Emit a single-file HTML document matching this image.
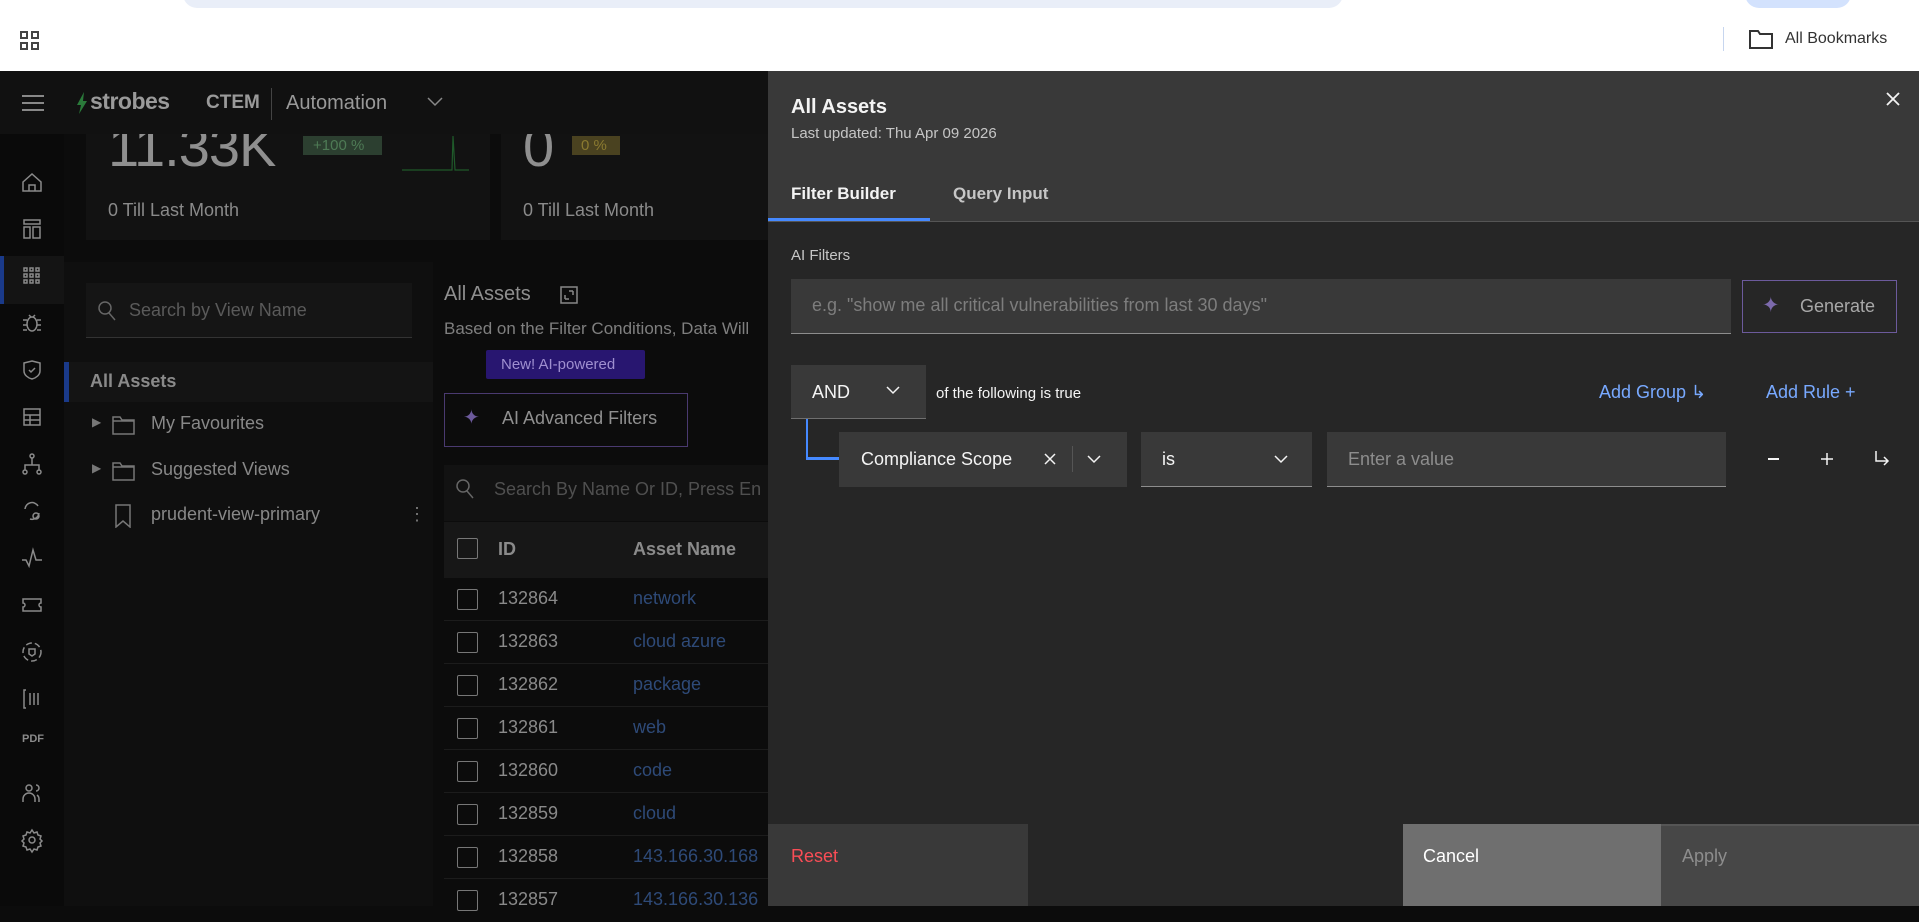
<!DOCTYPE html>
<html><head><meta charset="utf-8"><style>
*{margin:0;padding:0;box-sizing:border-box}
body{width:1919px;height:906px;overflow:hidden;background:#0c0c0c;font-family:"Liberation Sans",sans-serif;position:relative}
.a{position:absolute}
.t{position:absolute;white-space:nowrap}
svg{position:absolute}
</style></head><body>
<!-- cards (under topbar) -->
<div class="a" style="left:86px;top:134px;width:404px;height:106px;background:#121212"></div>
<div class="a" style="left:501px;top:134px;width:267px;height:106px;background:#121212"></div>
<div class="t" style="left:108px;top:114px;font-size:56px;color:#8f8f8f;letter-spacing:-1px">11.33K</div>
<div class="a" style="left:303px;top:136px;width:79px;height:19px;background:#2c3f30"></div>
<div class="t" style="left:313px;top:137px;font-size:15px;color:#4e7a55">+100 %</div>
<svg style="left:400px;top:134px" width="70" height="40" fill="none" stroke="#1f5a2a" stroke-width="1.2"><path d="M2 36h50l1-34 2 34h14"/></svg>
<div class="t" style="left:523px;top:114px;font-size:56px;color:#8f8f8f">0</div>
<div class="a" style="left:572px;top:136px;width:48px;height:19px;background:#4a4220"></div>
<div class="t" style="left:581px;top:137px;font-size:15px;color:#8a7a30">0 %</div>
<div class="t" style="left:108px;top:200px;font-size:18px;color:#8a8a8a">0 Till Last Month</div>
<div class="t" style="left:523px;top:200px;font-size:18px;color:#8a8a8a">0 Till Last Month</div>

<!-- chrome -->
<div class="a" style="left:0;top:0;width:1919px;height:71px;background:#fff"></div>
<div class="a" style="left:183px;top:-20px;width:1160px;height:28px;background:#e9eef8;border-radius:14px"></div>
<div class="a" style="left:1745px;top:-20px;width:106px;height:28px;background:#d3e2fd;border-radius:14px"></div>
<svg style="left:19px;top:30px" width="22" height="22" viewBox="0 0 22 22" fill="none" stroke="#444" stroke-width="2"><rect x="2" y="2" width="6" height="6"/><rect x="13" y="2" width="6" height="6"/><rect x="2" y="13" width="6" height="6"/><rect x="13" y="13" width="6" height="6"/></svg>
<div class="a" style="left:1723px;top:27px;width:1px;height:24px;background:#c7d6ef"></div>
<svg style="left:1748px;top:28px" width="26" height="22" viewBox="0 0 26 22" fill="none" stroke="#333" stroke-width="2"><path d="M2 3h8l2 3h12v14H2z"/></svg>
<div class="t" style="left:1785px;top:30px;font-size:16px;color:#333">All Bookmarks</div>

<!-- app topbar -->
<div class="a" style="left:0;top:71px;width:768px;height:63px;background:#111"></div>
<div class="a" style="left:0;top:134px;width:64px;height:772px;background:#0a0a0a"></div>
<svg style="left:21px;top:94px" width="24" height="18" stroke="#888" stroke-width="2"><path d="M1 2h22M1 9h22M1 16h22"/></svg>
<svg style="left:76px;top:92px" width="12" height="22" fill="#2a7a3a"><path d="M8 0L1 13h4l-2 9 8-13H7z"/></svg>
<div class="t" style="left:90px;top:88px;font-size:23px;font-weight:bold;color:#9a9a9a;letter-spacing:-0.5px">strobes</div>
<div class="t" style="left:206px;top:92px;font-size:19px;font-weight:bold;color:#9a9a9a">CTEM</div>
<div class="a" style="left:271px;top:88px;width:1px;height:32px;background:#444"></div>
<div class="t" style="left:286px;top:92px;font-size:20px;color:#999">Automation</div>
<svg style="left:427px;top:97px" width="16" height="10" fill="none" stroke="#888" stroke-width="1.5"><path d="M1 1l7 7 7-7"/></svg>

<!-- side icons -->
<div class="a" style="left:0;top:256px;width:4px;height:48px;background:#1a3a8a"></div>
<div class="a" style="left:4px;top:256px;width:60px;height:48px;background:#141414"></div>
<svg style="left:20px;top:170px" width="24" height="700" fill="none" stroke="#8a8a8a" stroke-width="1.5">
<path d="M3 12L12 4l9 8v9H3z M9 21v-6h6v6"/>
<g transform="translate(0,47)"><rect x="4" y="3" width="16" height="4"/><rect x="4" y="10" width="6" height="11"/><rect x="13" y="10" width="7" height="11"/></g>
<g transform="translate(0,94)"><path d="M4 4h3v3H4zM10 4h3v3h-3zM16 4h3v3h-3zM4 10h3v3H4zM10 10h3v3h-3zM16 10h3v3h-3zM4 16h3v3H4zM10 16h3v3h-3zM16 16h3v3h-3z"/></g>
<g transform="translate(0,141)"><ellipse cx="12" cy="13" rx="5" ry="7"/><path d="M3 9h4M17 9h4M3 14h4M17 14h4M3 19h4M17 19h4M9 4l2 2M15 4l-2 2"/></g>
<g transform="translate(0,188)"><path d="M12 3l8 2v8c0 4-4 7-8 8-4-1-8-4-8-8V5z M9 12l2 2 4-4"/></g>
<g transform="translate(0,235)"><rect x="4" y="4" width="16" height="16"/><path d="M4 10h16M10 10v10M4 15h16"/></g>
<g transform="translate(0,282)"><circle cx="12" cy="4" r="2"/><circle cx="5" cy="20" r="2"/><circle cx="19" cy="20" r="2"/><path d="M12 6v7M5 18v-5h14v5"/></g>
<g transform="translate(0,329)"><path d="M5 10a7 7 0 0 1 13-3M19 14a7 7 0 0 1-9 6"/><circle cx="16" cy="17" r="3"/></g>
<g transform="translate(0,376)"><path d="M2 14h4l3 6 4-16 3 10h6"/></g>
<g transform="translate(0,423)"><path d="M3 6h18v4a2 2 0 0 0 0 4v4H3v-4a2 2 0 0 0 0-4z"/></g>
<g transform="translate(0,470)"><circle cx="12" cy="12" r="9" stroke-dasharray="6 3"/><path d="M9 9h6v5l-3 2-3-2z"/></g>
<g transform="translate(0,517)"><path d="M6 3H4v18h2M10 6v12M14 6v12M18 6v12"/></g>
<g transform="translate(0,611)"><circle cx="9" cy="7" r="3"/><path d="M3 21v-3a6 6 0 0 1 12 0v3M16 4a3 3 0 0 1 0 6M19 21v-3a5 5 0 0 0-2-4"/></g>
<g transform="translate(0,658)"><circle cx="12" cy="12" r="3"/><path d="M12 2l2 3 3-1 1 3 3 1-1 3 2 2-2 2 1 3-3 1-1 3-3-1-2 3-2-3-3 1-1-3-3-1 1-3-2-2 2-2-1-3 3-1 1-3 3 1z"/></g>
</svg>
<div class="t" style="left:22px;top:733px;font-size:11px;font-weight:bold;color:#8a8a8a">PDF</div>

<!-- views sidebar -->
<div class="a" style="left:64px;top:262px;width:369px;height:644px;background:#0f0f0f"></div>
<div class="a" style="left:86px;top:283px;width:326px;height:55px;background:#151515;border-bottom:1px solid #333"></div>
<svg style="left:97px;top:300px" width="20" height="22" fill="none" stroke="#666" stroke-width="1.5"><circle cx="8" cy="8" r="6"/><path d="M12 13l6 7"/></svg>
<div class="t" style="left:129px;top:300px;font-size:18px;color:#5a5a5a">Search by View Name</div>
<div class="a" style="left:64px;top:362px;width:369px;height:40px;background:#141414;border-left:5px solid #1a3a8a"></div>
<div class="t" style="left:90px;top:371px;font-size:18px;font-weight:bold;color:#8a8a8a">All Assets</div>
<div class="t" style="left:92px;top:415px;font-size:12px;color:#777">▶</div>
<svg style="left:112px;top:413px" width="24" height="22" fill="none" stroke="#777" stroke-width="1.5"><path d="M1 4h7l2 3h12v14H1z M1 8h21"/></svg>
<div class="t" style="left:151px;top:413px;font-size:18px;color:#888">My Favourites</div>
<div class="t" style="left:92px;top:461px;font-size:12px;color:#777">▶</div>
<svg style="left:112px;top:459px" width="24" height="22" fill="none" stroke="#777" stroke-width="1.5"><path d="M1 4h7l2 3h12v14H1z M1 8h21"/></svg>
<div class="t" style="left:151px;top:459px;font-size:18px;color:#888">Suggested Views</div>
<svg style="left:115px;top:504px" width="16" height="24" fill="none" stroke="#777" stroke-width="1.5"><path d="M1 1h14v22l-7-6-7 6z"/></svg>
<div class="t" style="left:151px;top:504px;font-size:18px;color:#888">prudent-view-primary</div>
<div class="t" style="left:408px;top:504px;font-size:18px;color:#777">⋮</div>

<!-- main -->
<div class="t" style="left:444px;top:283px;font-size:20px;color:#8f8f8f">All Assets</div>
<svg style="left:560px;top:286px" width="18" height="18" fill="none" stroke="#888" stroke-width="1.5"><rect x="1" y="1" width="16" height="16"/><path d="M5 13V9M5 13h4M13 5v4M13 5H9"/></svg>
<div class="t" style="left:444px;top:319px;font-size:17px;color:#7f7f7f">Based on the Filter Conditions, Data Will</div>
<div class="a" style="left:486px;top:350px;width:159px;height:29px;background:#281670;border-radius:2px"></div>
<div class="t" style="left:501px;top:356px;font-size:15px;color:#9f8fd0">New! AI-powered</div>
<div class="a" style="left:444px;top:393px;width:244px;height:54px;border:1px solid #4a3a70"></div>
<div class="t" style="left:463px;top:405px;font-size:20px;color:#6c5a9c">✦</div>
<div class="t" style="left:502px;top:408px;font-size:18px;color:#909090">AI Advanced Filters</div>
<div class="a" style="left:444px;top:465px;width:324px;height:56px;background:#121212"></div>
<svg style="left:455px;top:478px" width="20" height="22" fill="none" stroke="#666" stroke-width="1.5"><circle cx="8" cy="8" r="6"/><path d="M12 13l6 7"/></svg>
<div class="t" style="left:494px;top:479px;font-size:18px;color:#4f4f4f">Search By Name Or ID, Press En</div>
<div class="a" style="left:444px;top:522px;width:324px;height:56px;background:#171717"></div>
<div class="a" style="left:457px;top:538px;width:21px;height:21px;border:1.5px solid #777;border-radius:2px"></div>
<div class="t" style="left:498px;top:539px;font-size:18px;font-weight:bold;color:#8a8a8a">ID</div>
<div class="t" style="left:633px;top:539px;font-size:18px;font-weight:bold;color:#8a8a8a">Asset Name</div>
<div style="position:absolute;left:444px;top:578px;width:324px">
<div style="height:43px;border-bottom:1px solid #1c1c1c;position:relative"><div class="a" style="left:13px;top:11px;width:21px;height:21px;border:1.5px solid #777;border-radius:2px"></div><div class="t" style="left:54px;top:10px;font-size:18px;color:#8a8a8a">132864</div><div class="t" style="left:189px;top:10px;font-size:18px;color:#2e4a78">network</div></div>
<div style="height:43px;border-bottom:1px solid #1c1c1c;position:relative"><div class="a" style="left:13px;top:11px;width:21px;height:21px;border:1.5px solid #777;border-radius:2px"></div><div class="t" style="left:54px;top:10px;font-size:18px;color:#8a8a8a">132863</div><div class="t" style="left:189px;top:10px;font-size:18px;color:#2e4a78">cloud azure</div></div>
<div style="height:43px;border-bottom:1px solid #1c1c1c;position:relative"><div class="a" style="left:13px;top:11px;width:21px;height:21px;border:1.5px solid #777;border-radius:2px"></div><div class="t" style="left:54px;top:10px;font-size:18px;color:#8a8a8a">132862</div><div class="t" style="left:189px;top:10px;font-size:18px;color:#2e4a78">package</div></div>
<div style="height:43px;border-bottom:1px solid #1c1c1c;position:relative"><div class="a" style="left:13px;top:11px;width:21px;height:21px;border:1.5px solid #777;border-radius:2px"></div><div class="t" style="left:54px;top:10px;font-size:18px;color:#8a8a8a">132861</div><div class="t" style="left:189px;top:10px;font-size:18px;color:#2e4a78">web</div></div>
<div style="height:43px;border-bottom:1px solid #1c1c1c;position:relative"><div class="a" style="left:13px;top:11px;width:21px;height:21px;border:1.5px solid #777;border-radius:2px"></div><div class="t" style="left:54px;top:10px;font-size:18px;color:#8a8a8a">132860</div><div class="t" style="left:189px;top:10px;font-size:18px;color:#2e4a78">code</div></div>
<div style="height:43px;border-bottom:1px solid #1c1c1c;position:relative"><div class="a" style="left:13px;top:11px;width:21px;height:21px;border:1.5px solid #777;border-radius:2px"></div><div class="t" style="left:54px;top:10px;font-size:18px;color:#8a8a8a">132859</div><div class="t" style="left:189px;top:10px;font-size:18px;color:#2e4a78">cloud</div></div>
<div style="height:43px;border-bottom:1px solid #1c1c1c;position:relative"><div class="a" style="left:13px;top:11px;width:21px;height:21px;border:1.5px solid #777;border-radius:2px"></div><div class="t" style="left:54px;top:10px;font-size:18px;color:#8a8a8a">132858</div><div class="t" style="left:189px;top:10px;font-size:18px;color:#2e4a78">143.166.30.168</div></div>
<div style="height:43px;position:relative"><div class="a" style="left:13px;top:11px;width:21px;height:21px;border:1.5px solid #777;border-radius:2px"></div><div class="t" style="left:54px;top:10px;font-size:18px;color:#8a8a8a">132857</div><div class="t" style="left:189px;top:10px;font-size:18px;color:#2e4a78">143.166.30.136</div></div>
</div>

<!-- panel -->
<div class="a" style="left:768px;top:71px;width:1151px;height:150px;background:#393939"></div>
<div class="a" style="left:768px;top:221px;width:1151px;height:685px;background:#262626;border-top:1px solid #555"></div>
<div class="t" style="left:791px;top:96px;font-size:20px;font-weight:bold;color:#f4f4f4">All Assets</div>
<div class="t" style="left:791px;top:125px;font-size:15px;color:#c6c6c6">Last updated: Thu Apr 09 2026</div>
<svg style="left:1885px;top:91px" width="16" height="16" stroke="#f4f4f4" stroke-width="1.8"><path d="M2 2l12 12M14 2L2 14"/></svg>
<div class="t" style="left:791px;top:184px;font-size:17px;font-weight:bold;color:#f4f4f4">Filter Builder</div>
<div class="t" style="left:953px;top:184px;font-size:17px;font-weight:bold;color:#c6c6c6">Query Input</div>
<div class="a" style="left:768px;top:218px;width:162px;height:3px;background:#4589ff"></div>
<div class="t" style="left:791px;top:247px;font-size:15px;color:#c6c6c6">AI Filters</div>
<div class="a" style="left:791px;top:279px;width:940px;height:55px;background:#393939;border-bottom:1.5px solid #8d8d8d"></div>
<div class="t" style="left:812px;top:295px;font-size:18px;color:#7d7d7d">e.g. "show me all critical vulnerabilities from last 30 days"</div>
<div class="a" style="left:1742px;top:280px;width:155px;height:53px;border:1.5px solid #6c5a9c"></div>
<div class="t" style="left:1762px;top:293px;font-size:21px;color:#7c6aac">✦</div>
<div class="t" style="left:1800px;top:296px;font-size:18px;color:#a8a8a8">Generate</div>
<div class="a" style="left:791px;top:365px;width:135px;height:54px;background:#393939;border-bottom:1.5px solid #6f6f6f"></div>
<div class="t" style="left:812px;top:382px;font-size:18px;color:#f4f4f4">AND</div>
<svg style="left:886px;top:386px" width="14" height="9" fill="none" stroke="#f4f4f4" stroke-width="1.5"><path d="M1 1l6 6 6-6"/></svg>
<div class="t" style="left:936px;top:385px;font-size:15px;color:#f4f4f4">of the following is true</div>
<div class="t" style="left:1599px;top:382px;font-size:18px;color:#78a9ff">Add Group ↳</div>
<div class="t" style="left:1766px;top:382px;font-size:18px;color:#78a9ff">Add Rule  +</div>
<div class="a" style="left:806px;top:419px;width:2px;height:41px;background:#4589ff"></div>
<div class="a" style="left:806px;top:457px;width:34px;height:3px;background:#4589ff"></div>
<div class="a" style="left:839px;top:432px;width:288px;height:55px;background:#393939"></div>
<div class="t" style="left:861px;top:449px;font-size:18px;color:#f4f4f4">Compliance Scope</div>
<svg style="left:1044px;top:453px" width="12" height="12" stroke="#f4f4f4" stroke-width="1.5"><path d="M1 1l10 10M11 1L1 11"/></svg>
<div class="a" style="left:1072px;top:446px;width:1px;height:26px;background:#555"></div>
<svg style="left:1087px;top:455px" width="14" height="9" fill="none" stroke="#f4f4f4" stroke-width="1.5"><path d="M1 1l6 6 6-6"/></svg>
<div class="a" style="left:1141px;top:432px;width:171px;height:55px;background:#393939;border-bottom:1.5px solid #8d8d8d"></div>
<div class="t" style="left:1162px;top:449px;font-size:18px;color:#f4f4f4">is</div>
<svg style="left:1274px;top:455px" width="14" height="9" fill="none" stroke="#f4f4f4" stroke-width="1.5"><path d="M1 1l6 6 6-6"/></svg>
<div class="a" style="left:1327px;top:432px;width:399px;height:55px;background:#393939;border-bottom:1.5px solid #8d8d8d"></div>
<div class="t" style="left:1348px;top:449px;font-size:18px;color:#8d8d8d">Enter a value</div>
<div class="a" style="left:1768px;top:458px;width:11px;height:2px;background:#f4f4f4"></div>
<svg style="left:1820px;top:452px" width="14" height="14" stroke="#f4f4f4" stroke-width="1.5"><path d="M7 1v12M1 7h12"/></svg>
<svg style="left:1874px;top:450px" width="16" height="16" fill="none" stroke="#f4f4f4" stroke-width="1.5"><path d="M2 1v10h12M10 7l4 4-4 4"/></svg>

<!-- footer -->
<div class="a" style="left:768px;top:824px;width:260px;height:82px;background:#393939"></div>
<div class="t" style="left:791px;top:846px;font-size:18px;color:#fa4d56">Reset</div>
<div class="a" style="left:1403px;top:824px;width:258px;height:82px;background:#6f6f6f"></div>
<div class="t" style="left:1423px;top:846px;font-size:18px;color:#fff">Cancel</div>
<div class="a" style="left:1661px;top:824px;width:258px;height:82px;background:#474747;border-top:2px solid #555"></div>
<div class="t" style="left:1682px;top:846px;font-size:18px;color:#8d8d8d">Apply</div>
</body></html>
